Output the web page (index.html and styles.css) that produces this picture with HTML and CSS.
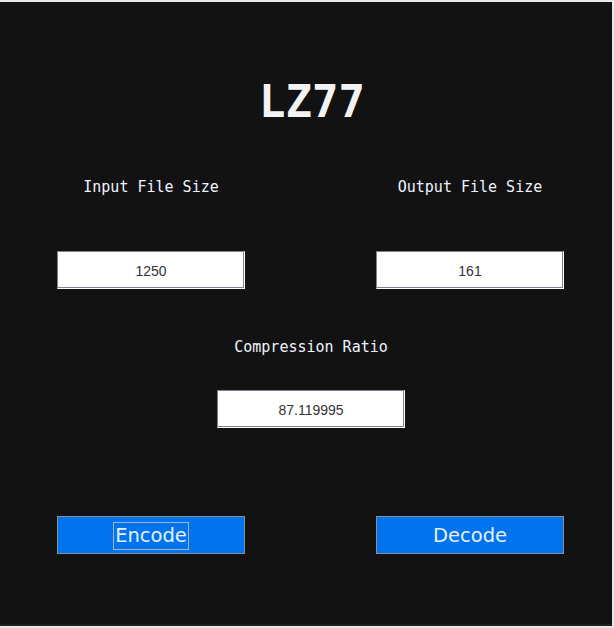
FILE: index.html
```html
<!DOCTYPE html>
<html>
<head>
<meta charset="utf-8">
<link rel="stylesheet" href="styles.css">
</head>
<body>
<div class="app">
  <h1 class="title">LZ77</h1>
  <div class="pair">
    <div class="field">
      <div class="label">Input File Size</div>
      <div class="box">1250</div>
    </div>
    <div class="field">
      <div class="label">Output File Size</div>
      <div class="box">161</div>
    </div>
  </div>
  <div class="field center">
    <div class="label">Compression Ratio</div>
    <div class="box">87.119995</div>
  </div>
  <div class="pair buttons">
    <button class="btn"><span class="focus">Encode</span></button>
    <button class="btn"><span class="plain">Decode</span></button>
  </div>
</div>
</body>
</html>
```
FILE: styles.css
```css
html, body {
  margin: 0;
  padding: 0;
  background: #e8e8e8;
}
.app {
  margin-top: 2px;
  width: 612px;
  height: 624px;
  background: #121212;
  box-sizing: border-box;
  padding-top: 75px;
  border-bottom: 2px solid #1f1f1f;
}
.title {
  margin: 0;
  font-family: "DejaVu Sans Mono", monospace;
  font-weight: bold;
  font-size: 44px;
  line-height: 50px;
  height: 50px;
  color: #f3f3f3;
  text-align: center;
  padding-left: 12px;
}
.pair {
  display: grid;
  grid-template-columns: 188px 188px;
  column-gap: 131px;
  padding-left: 57px;
  margin-top: 50px;
}
.field {
  display: flex;
  flex-direction: column;
  align-items: center;
}
.label {
  font-family: "DejaVu Sans Mono", monospace;
  font-size: 15px;
  line-height: 20px;
  height: 20px;
  color: #eef3ff;
  white-space: nowrap;
}
.pair .label {
  margin-bottom: 54px;
}
.box {
  width: 188px;
  height: 38px;
  box-sizing: border-box;
  background: #fff;
  border-top: 1px solid #7a838e;
  border-left: 1px solid #7a838e;
  border-right: 1px solid #fff;
  border-bottom: 1px solid #fff;
  box-shadow: inset -1px -1px 0 #7a838e;
  font-family: "Liberation Sans", Arial, sans-serif;
  font-size: 14px;
  line-height: 38px;
  color: #333;
  text-align: center;
}
.center {
  margin-top: 48px;
  padding-left: 217px;
  align-items: flex-start;
  width: 188px;
}
.center .label {
  align-self: center;
  margin-bottom: 33px;
}
.buttons {
  margin-top: 88px;
}
.btn {
  width: 188px;
  height: 38px;
  margin: 0;
  padding: 1px 0 0 0;
  background: #0074ef;
  border: 1px solid #8a8f96;
  font-family: "DejaVu Sans", sans-serif;
  font-size: 19.5px;
  color: #e8eef8;
  display: flex;
  align-items: center;
  justify-content: center;
}
.focus {
  border: 1px solid #a6b0c0;
  line-height: 26px;
  padding: 0 1px;
}
.plain {
  line-height: 26px;
  padding: 1px 2px;
}
```
